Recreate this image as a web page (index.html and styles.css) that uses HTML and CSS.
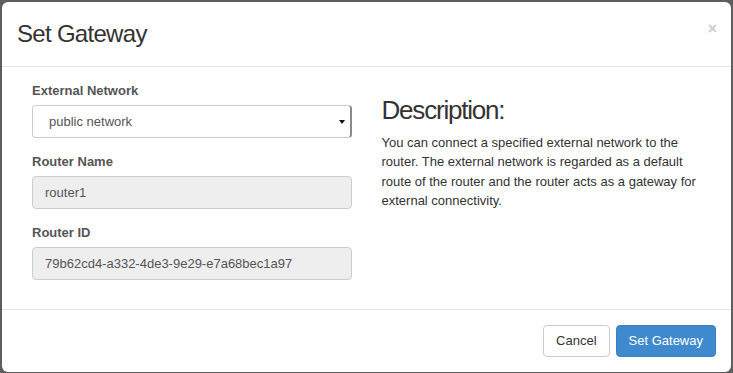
FILE: index.html
```html
<!DOCTYPE html>
<html lang="en">
<head>
    <meta charset="UTF-8">
    <meta name="viewport" content="width=device-width, initial-scale=1.0">
    <title>Set Gateway</title>
    <link rel="stylesheet" href="styles.css">
</head>
<body>
    <div class="modal">
        <div class="modal-header">
            <h4 class="modal-title">Set Gateway</h4>
            <span class="close">&times;</span>
        </div>

        <div class="modal-body">
            <div class="col">
                <div class="form-group">
                    <label>External Network</label>
                    <div class="select">
                        <span>public network</span>
                        <span class="caret"></span>
                    </div>
                </div>
                <div class="form-group">
                    <label>Router Name</label>
                    <div class="input disabled">router1</div>
                </div>
                <div class="form-group">
                    <label>Router ID</label>
                    <div class="input disabled">79b62cd4-a332-4de3-9e29-e7a68bec1a97</div>
                </div>
            </div>
            <div class="col">
                <h3>Description:</h3>
                <p>You can connect a specified external network to the router. The external network is regarded as a default route of the router and the router acts as a gateway for external connectivity.</p>
            </div>
        </div>

        <div class="modal-footer">
            <button class="btn">Cancel</button>
            <button class="btn btn-primary">Set Gateway</button>
        </div>
    </div>
</body>
</html>
```

FILE: styles.css
```css
body {
    margin: 0;
    padding: 2px;
    background-color: #5e5e5e;
    font-family: "Liberation Sans", Arial, sans-serif;
    font-size: 13px;
    line-height: 1.42857;
    color: #333;
}
.modal {
    width: 729px;
    height: 370px;
    background-color: #fff;
    border-radius: 6px;
    display: flex;
    flex-direction: column;
    overflow: hidden;
}
.modal-header {
    padding: 15px;
    border-bottom: 1px solid #e5e5e5;
    display: flex;
    justify-content: space-between;
    align-items: flex-start;
}
.modal-title {
    margin: 0;
    font-size: 24px;
    font-weight: normal;
    line-height: 34px;
    letter-spacing: -0.7px;
    color: #333;
}
.close {
    font-size: 16px;
    font-weight: bold;
    line-height: 1;
    color: #000;
    opacity: 0.2;
    margin-top: 4px;
    margin-right: -1px;
}
.modal-body {
    padding: 15px;
    display: flex;
    flex: 1;
}
.col {
    flex: 1;
    padding: 0 15px;
}
.form-group {
    margin-bottom: 15px;
}
.form-group:last-child {
    margin-bottom: 14px;
}
label {
    display: block;
    font-weight: bold;
    color: #555;
    line-height: 18px;
    margin-bottom: 5px;
}
.select, .input {
    height: 33px;
    box-sizing: border-box;
    border: 1px solid #ccc;
    border-radius: 4px;
    padding: 7px 12px 6px;
    color: #555;
    line-height: 18px;
}
.select {
    padding-left: 16px;
    display: flex;
    justify-content: space-between;
    align-items: center;
    border-right: 2px solid #8a8a8a;
    padding-right: 5px;
}
.caret {
    width: 0;
    height: 0;
    border-left: 3px solid transparent;
    border-right: 3px solid transparent;
    border-top: 4px solid #111;
    margin-top: -1px;
}
.input.disabled {
    background-color: #eee;
}
h3 {
    margin: 14px 0 8px;
    font-size: 26px;
    font-weight: normal;
    line-height: 1.1;
    letter-spacing: -1.2px;
    color: #333;
}
p {
    margin: 0;
    line-height: 19.5px;
}
.modal-footer {
    padding: 15px;
    border-top: 1px solid #e5e5e5;
    display: flex;
    justify-content: flex-end;
    gap: 6px;
}
.btn {
    height: 32px;
    padding: 6px 12px;
    font-family: inherit;
    font-size: 13px;
    line-height: 18px;
    border: 1px solid #ccc;
    border-radius: 4px;
    background-color: #fff;
    color: #333;
}
.btn-primary {
    background-color: #3f8ace;
    border-color: #3781c4;
    color: #fff;
}
```
